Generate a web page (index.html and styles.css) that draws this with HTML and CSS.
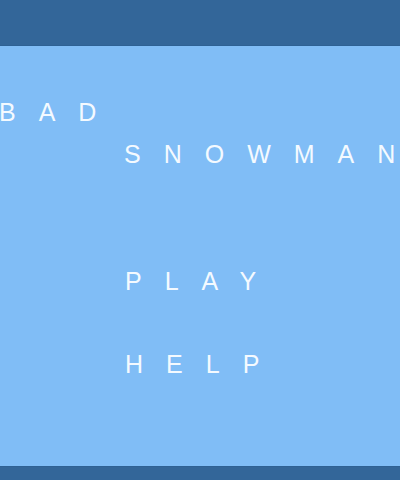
FILE: index.html
```html
<!DOCTYPE html>
<html lang="en">
<head>
    <meta charset="UTF-8">
    <meta name="viewport" content="width=device-width, initial-scale=1.0">
    <title>Bad Snowman</title>
    <link rel="stylesheet" href="styles.css">
</head>
<body>
    <div class="top-bar"></div>

    <div class="screen">
        <h1 class="title">
            <span class="title-bad">BAD</span>
            <span class="title-snowman">SNOWMAN</span>
        </h1>

        <div class="menu">
            <a class="menu-item" href="#play">PLAY</a>
            <a class="menu-item" href="#help">HELP</a>
        </div>
    </div>

    <div class="bottom-bar"></div>
</body>
</html>
```

FILE: styles.css
```css
body {
    margin: 0;
    font-family: "Liberation Sans", Arial, sans-serif;
    background-color: #80bdf6;
    color: #f4faff;
    overflow: hidden;
}

.top-bar {
    height: 45px;
    background-color: #336699;
    border-bottom: 1px solid #2e6194;
}

.screen {
    height: 420px;
    padding-top: 45px;
    box-sizing: border-box;
}

.title {
    margin: 0;
    font-size: 25px;
    font-weight: normal;
    line-height: 42px;
    letter-spacing: 23px;
    white-space: nowrap;
}

.title span {
    display: block;
}

.title-bad {
    margin-left: -1px;
}

.title-snowman {
    padding-left: 124px;
    margin-right: -23px;
}

.menu {
    display: flex;
    flex-direction: column;
    gap: 41px;
    margin-top: 85px;
    padding-left: 125px;
}

.menu-item {
    font-size: 25px;
    line-height: 42px;
    letter-spacing: 23px;
    color: #f4faff;
    text-decoration: none;
}

.bottom-bar {
    height: 40px;
    background-color: #336699;
    border-top: 1px solid #2e6194;
}
```
